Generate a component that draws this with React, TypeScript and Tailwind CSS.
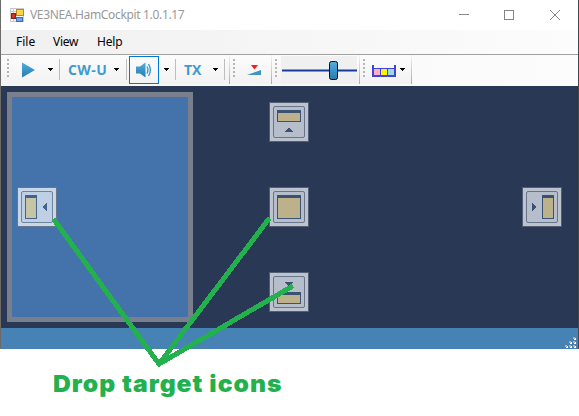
import React from "react";

function Grip() {
  return (
    <div className="ml-[3px] flex h-[18px] w-[2px] shrink-0 flex-col justify-between self-start mt-[4px]">
      {[0, 1, 2, 3, 4].map((i) => (
        <span key={i} className="h-[2px] w-[2px] bg-[#b5b5b5]" />
      ))}
    </div>
  );
}

function Caret({ className = "" }: { className?: string }) {
  return (
    <svg className={"shrink-0 " + className} width="5" height="3" viewBox="0 0 5 3" shapeRendering="crispEdges">
      <path d="M0 0h5v1H4v1H3v1H2V2H1V1H0z" fill="#000" />
    </svg>
  );
}

function Divider({ className = "" }: { className?: string }) {
  return <div className={"h-[21px] w-px shrink-0 bg-[#bdbdbd] " + className} />;
}

function Strip({ className, children }: { className: string; children: React.ReactNode }) {
  return (
    <div className={"flex h-[29px] shrink-0 items-center bg-linear-to-b from-[#fcfcfc] to-[#f2f2f2] " + className}>
      {children}
      <div className="ml-auto h-full w-px bg-linear-to-b from-[#f4f4f4] to-[#aaaaaa]" />
    </div>
  );
}

type Side = "left" | "right" | "top" | "bottom" | "center";

const panes: Record<Side, [number, number, number, number]> = {
  left: [8, 8, 12, 24],
  right: [20, 8, 12, 24],
  top: [8, 8, 24, 12],
  bottom: [8, 20, 24, 12],
  center: [8, 8, 24, 24],
};

const arrows: Record<Side, string> = {
  left: "M30 16v8h-1v-1h-1v-1h-1v-1h-1v-2h1v-1h1v-1h1v-1z",
  right: "M10 16v8h1v-1h1v-1h1v-1h1v-2h-1v-1h-1v-1h-1v-1z",
  top: "M16 30h8v-1h-1v-1h-1v-1h-1v-1h-2v1h-1v1h-1v1h-1z",
  bottom: "M16 10h8v1h-1v1h-1v1h-1v1h-2v-1h-1v-1h-1v-1h-1z",
  center: "",
};

function DropTarget({ side, className }: { side: Side; className: string }) {
  const [x, y, w, h] = panes[side];
  const hot = side === "left";
  const ink = hot ? "#41638f" : "#3c5272";
  return (
    <svg className={"absolute " + className} width="40" height="40" viewBox="0 0 40 40">
      <rect x=".5" y=".5" width="39" height="39" fill={hot ? "#c9d8e9" : "#bdc2cf"} stroke={hot ? "#65768d" : "#525e73"} />
      <rect x="4.5" y="4.5" width="31" height="31" rx="1.5" fill={hot ? "#bfd0e4" : "#b6bdcb"} stroke={hot ? "#70839f" : "#69758b"} />
      <g shapeRendering="crispEdges">
        <rect x={x} y={y} width={w} height={h} fill={ink} />
        <rect x={x + 1} y={y + 3} width={w - 2} height={h - 4} fill={hot ? "#c5c5a6" : "#bdb18c"} />
        <path d={arrows[side]} fill={ink} />
      </g>
    </svg>
  );
}

export default function App() {
  return (
    <div className="h-[416px] w-[579px] overflow-hidden bg-white font-['Noto_Sans','Open_Sans',sans-serif]">
      <div className="relative h-[349px] border-x border-l-[#6d6b68] border-r-[#45484a]">
        <header className="flex h-[30px] items-center bg-white pl-[9px]">
          <svg width="14" height="14" viewBox="0 0 14 14" className="shrink-0">
            <rect x=".5" y=".5" width="13" height="13" fill="#fafafa" stroke="#c9c9c9" />
            <path d="M3.5 0v14M0 3.5h14M0 10.5h14" stroke="#c9c9c9" />
            <rect x="1.5" y="5.5" width="4" height="5" fill="#cf3429" stroke="#941b16" />
            <rect x="6.5" y="1.5" width="7" height="6" fill="#ffd34c" stroke="#bd8710" />
            <rect x="6.5" y="9.5" width="6" height="4" fill="#71a5ea" stroke="#3d6db5" />
          </svg>
          <span className="ml-[6px] w-[156px] whitespace-nowrap text-[12px] leading-[16px] tracking-[-0.34px] text-[#999999]">VE3NEA.HamCockpit 1.0.1.17</span>
          <svg className="ml-auto mr-[17px]" width="102" height="12" viewBox="0 0 102 12" fill="none" stroke="#858585">
            <path d="M0 5.500h10" />
            <rect x="45.500" y="1.500" width="9" height="9" />
            <path d="M91 1l10 10M101 1L91 11" />
          </svg>
        </header>
        <nav className="flex h-[24px] items-center bg-linear-to-r from-[#f0f0f0] to-[#fcfcfc] text-[12px] leading-[16px] text-black">
          <span className="ml-[15px] w-[37px]">File</span>
          <span className="w-[44px] tracking-[-0.3px]">View</span>
          <span className="tracking-[-0.2px]">Help</span>
        </nav>
        <div className="flex h-[32px] border-t border-[#a0a0a0] bg-linear-to-r from-[#f5f5f5] to-[#fcfcfc]">
          <Strip className="w-[229px] pl-[3px]">
            <Grip />
            <svg className="ml-[13px] shrink-0" width="14" height="16" viewBox="0 0 14 16">
              <defs>
                <linearGradient id="blue" x2="0" y2="1">
                  <stop stopColor="#4fafdf" />
                  <stop offset="1" stopColor="#247cae" />
                </linearGradient>
              </defs>
              <path d="M0 .5L13 8 0 15.500z" fill="url(#blue)" />
            </svg>
            <Caret className="ml-[12px]" />
            <Divider className="ml-[6px]" />
            <span className="ml-[8px] w-[40px] whitespace-nowrap font-['Open_Sans'] text-[14px] font-bold leading-[18px] tracking-[0.4px] text-[#429bcc]">CW-U</span>
            <Caret className="ml-[6px]" />
            <Divider className="ml-[7px]" />
            <div className="ml-[2px] flex h-[28px] w-[30px] shrink-0 items-center justify-center border border-[#0078d7]">
              <svg width="16" height="16" viewBox="0 0 16 16" fill="none">
                <path d="M0 4.500h4L9.500 .5v15L4 11.500H0z" fill="url(#blue)" />
                <path d="M11 4.500q1.800 3.500 0 7M12.500 2q3.800 6 0 12" stroke="#3c97c8" strokeWidth="1.400" />
              </svg>
            </div>
            <Caret className="ml-[5px]" />
            <Divider className="ml-[6px]" />
            <span className="ml-[8px] w-[19px] whitespace-nowrap font-['Open_Sans'] text-[14px] font-bold leading-[18px] tracking-[-0.2px] text-[#429bcc]">TX</span>
            <Caret className="ml-[10px]" />
            <Divider className="ml-[6px]" />
          </Strip>
          <Strip className="w-[42px]">
            <Grip />
            <svg className="ml-[12px] shrink-0" width="14" height="10" viewBox="0 0 14 10">
              <path d="M4 0h7L7.500 4.500z" fill="#ef1c28" />
              <path d="M0 10l14-5v5z" fill="#3c96c7" />
            </svg>
          </Strip>
          <Strip className="w-[88px]">
            <Grip />
            <div className="ml-[4px] flex h-[28px] w-[76px] shrink-0 items-center bg-[#f0f0f0]">
              <svg width="76" height="20" viewBox="0 0 76 20">
                <path d="M1 10.500h75" stroke="#7898da" strokeWidth="3" />
                <path d="M1 10.500h75" stroke="#173b9b" />
                <rect x="48.500" y="1.500" width="8" height="18" rx="2" fill="url(#blue)" stroke="#090d10" />
              </svg>
            </div>
          </Strip>
          <Strip className="w-[52px]">
            <Grip />
            <svg className="ml-[7px] mt-[3px] shrink-0" width="24" height="12" viewBox="0 0 24 12" shapeRendering="crispEdges">
              <path d="M0 0h2v3h20V0h2v12H0z" fill="#4146d2" />
              <path d="M2 4h6v6H2z" fill="#ffadc8" />
              <path d="M9 4h6v6H9z" fill="#fff200" />
              <path d="M16 4h6v6h-6z" fill="#99d9ea" />
            </svg>
            <Caret className="ml-[4px]" />
          </Strip>
        </div>
        <main className="relative h-[242px] bg-[#293955] pl-[6px] pt-[6px]">
          <div className="h-[230px] w-[186px] border-[5px] border-[#797f8c] bg-[#4472aa]" />
          <DropTarget side="left" className="left-[16px] top-[101px]" />
          <DropTarget side="top" className="left-[268px] top-[16px]" />
          <DropTarget side="center" className="left-[268px] top-[101px]" />
          <DropTarget side="bottom" className="left-[268px] top-[186px]" />
          <DropTarget side="right" className="left-[521px] top-[101px]" />
        </main>
        <footer className="flex h-[21px] items-end justify-end bg-[#4682b4] pr-[1px]">
          <svg width="12" height="12" viewBox="0 0 12 12" shapeRendering="crispEdges">
            {[[9, 1], [5, 5], [9, 5], [1, 9], [5, 9], [9, 9]].map(([x, y]) => (
              <g key={x + "-" + y}>
                <rect x={x} y={y} width="2" height="2" fill="#fff" />
                <rect x={x - 1} y={y - 1} width="2" height="2" fill="#b6aea4" />
              </g>
            ))}
          </svg>
        </footer>
        <svg className="pointer-events-none absolute -left-px top-0" width="310" height="370" viewBox="0 0 310 370" fill="none" shapeRendering="crispEdges">
          <path d="M55 221L159 364L268 220M159 364L291 287" stroke="#22b14c" strokeWidth="5" strokeLinecap="round" strokeLinejoin="round" />
        </svg>
      </div>
      <p className="ml-[53px] mt-[20px] origin-left scale-x-[1.05] whitespace-nowrap font-['Inter'] text-[23.5px] font-black leading-[30px] tracking-[0.95px] text-[#22b14c]">Drop target icons</p>
    </div>
  );
}
